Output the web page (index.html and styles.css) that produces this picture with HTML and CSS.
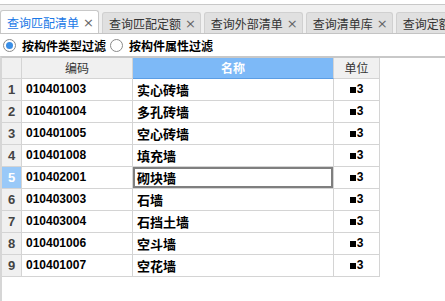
FILE: index.html
```html
<!DOCTYPE html>
<html lang="zh-CN">
<head>
    <meta charset="UTF-8">
    <title>查询匹配清单</title>
    <link rel="stylesheet" href="styles.css">
</head>
<body>
    <div class="page">
        <div class="tabbar">
            <div class="tab active">查询匹配清单<span class="close">×</span></div>
            <div class="tab">查询匹配定额<span class="close">×</span></div>
            <div class="tab">查询外部清单<span class="close">×</span></div>
            <div class="tab">查询清单库<span class="close">×</span></div>
            <div class="tab">查询定额库<span class="close">×</span></div>
        </div>

        <div class="filters">
            <label class="radio"><span class="dot checked"></span>按构件类型过滤</label>
            <label class="radio"><span class="dot"></span>按构件属性过滤</label>
        </div>

        <div class="grid-wrap">
            <div class="row head">
                <div class="cell num"></div>
                <div class="cell center">编码</div>
                <div class="cell center sel-head">名称</div>
                <div class="cell center">单位</div>
            </div>
            <div class="row">
                <div class="cell num">1</div>
                <div class="cell code">010401003</div>
                <div class="cell name">实心砖墙</div>
                <div class="cell unit"><span class="sq"></span>3</div>
            </div>
            <div class="row">
                <div class="cell num">2</div>
                <div class="cell code">010401004</div>
                <div class="cell name">多孔砖墙</div>
                <div class="cell unit"><span class="sq"></span>3</div>
            </div>
            <div class="row">
                <div class="cell num">3</div>
                <div class="cell code">010401005</div>
                <div class="cell name">空心砖墙</div>
                <div class="cell unit"><span class="sq"></span>3</div>
            </div>
            <div class="row">
                <div class="cell num">4</div>
                <div class="cell code">010401008</div>
                <div class="cell name">填充墙</div>
                <div class="cell unit"><span class="sq"></span>3</div>
            </div>
            <div class="row">
                <div class="cell num current">5</div>
                <div class="cell code">010402001</div>
                <div class="cell name focused">砌块墙</div>
                <div class="cell unit"><span class="sq"></span>3</div>
            </div>
            <div class="row">
                <div class="cell num">6</div>
                <div class="cell code">010403003</div>
                <div class="cell name">石墙</div>
                <div class="cell unit"><span class="sq"></span>3</div>
            </div>
            <div class="row">
                <div class="cell num">7</div>
                <div class="cell code">010403004</div>
                <div class="cell name">石挡土墙</div>
                <div class="cell unit"><span class="sq"></span>3</div>
            </div>
            <div class="row">
                <div class="cell num">8</div>
                <div class="cell code">010401006</div>
                <div class="cell name">空斗墙</div>
                <div class="cell unit"><span class="sq"></span>3</div>
            </div>
            <div class="row">
                <div class="cell num">9</div>
                <div class="cell code">010401007</div>
                <div class="cell name">空花墙</div>
                <div class="cell unit"><span class="sq"></span>3</div>
            </div>
        </div>
    </div>
</body>
</html>
```

FILE: styles.css
```css
/* page frame */
body {
    margin: 0;
    font-family: 'Liberation Sans', 'Noto Sans CJK SC', sans-serif;
    font-size: 12px;
    color: #000;
    background: #fff;
}

.page {
    height: 100vh;
    display: flex;
    flex-direction: column;
    padding-top: 4px;
    box-sizing: border-box;
    overflow: hidden;
}

/* tab strip */
.tabbar {
    display: flex;
    align-items: flex-end;
    gap: 3px;
    height: 30px;
    background: #f0f0f0;
    border-top: 1px solid #c8c8c8;
    border-bottom: 1px solid #c4c4c4;
    box-sizing: border-box;
    white-space: nowrap;
    overflow: hidden;
}

.tab {
    flex: none;
    display: flex;
    align-items: center;
    height: 20px;
    padding: 0 4px 0 6px;
    background: #e0e0e0;
    color: #333;
    border: 1px solid #d0d0d0;
    border-bottom: none;
    border-radius: 3px 3px 0 0;
    font-family: 'Noto Sans CJK SC', sans-serif;
    font-size: 12px;
}

.tab.active {
    height: 23px;
    background: #fff;
    color: #1a78e6;
    border-color: #c8c8c8;
    margin-bottom: -1px;
}

.close {
    color: #666;
    font-family: 'DejaVu Sans', sans-serif;
    font-size: 13px;
    margin-left: 4px;
}

/* filter radios */
.filters {
    display: flex;
    align-items: center;
    height: 22px;
    padding-left: 3px;
    font-family: 'Noto Sans CJK SC', sans-serif;
    font-weight: bold;
}

.radio {
    display: flex;
    align-items: center;
    margin-right: 4px;
}

.dot {
    width: 11px;
    height: 11px;
    border: 1px solid #8a8a8a;
    border-radius: 50%;
    background: #fff;
    margin-right: 6px;
    position: relative;
}

.dot.checked::after {
    content: '';
    position: absolute;
    left: 2px;
    top: 2px;
    width: 7px;
    height: 7px;
    border-radius: 50%;
    background: #3a8ee6;
}

/* grid */
.grid-wrap {
    flex: 1;
    border-top: 2px solid #c8c8c8;
    border-left: 2px solid #d6d6d6;
}

.row {
    display: grid;
    grid-template-columns: 20px 111px 201px 46px;
    height: 22px;
}

.row.head {
    height: 21px;
}

.cell {
    box-sizing: border-box;
    border-right: 1px solid #d4d4d4;
    border-bottom: 1px solid #d4d4d4;
    line-height: 21px;
    font-weight: bold;
    overflow: hidden;
    white-space: nowrap;
}

.head .cell {
    background: #f0f0f0;
    color: #333;
    font-family: 'Noto Sans CJK SC', sans-serif;
    font-weight: normal;
    line-height: 20px;
}

.center {
    text-align: center;
}

.head .sel-head {
    background: #7db9f7;
    color: #fff;
    font-weight: bold;
    border-bottom-color: #5b9de4;
}

.num {
    background: #f0f0f0;
    color: #444;
    text-align: center;
    font-size: 13px;
}

.num.current {
    background: #99c9f8;
    color: #fff;
}

.code {
    padding-left: 4px;
}

.name {
    padding-left: 4px;
    font-family: 'Noto Sans CJK SC', sans-serif;
    font-size: 13px;
}

.name.focused {
    box-shadow: inset 0 0 0 2px #7f7f7f;
}

.unit {
    text-align: center;
}

.sq {
    display: inline-block;
    width: 6px;
    height: 6px;
    background: #000;
    margin-right: 1px;
}
```
